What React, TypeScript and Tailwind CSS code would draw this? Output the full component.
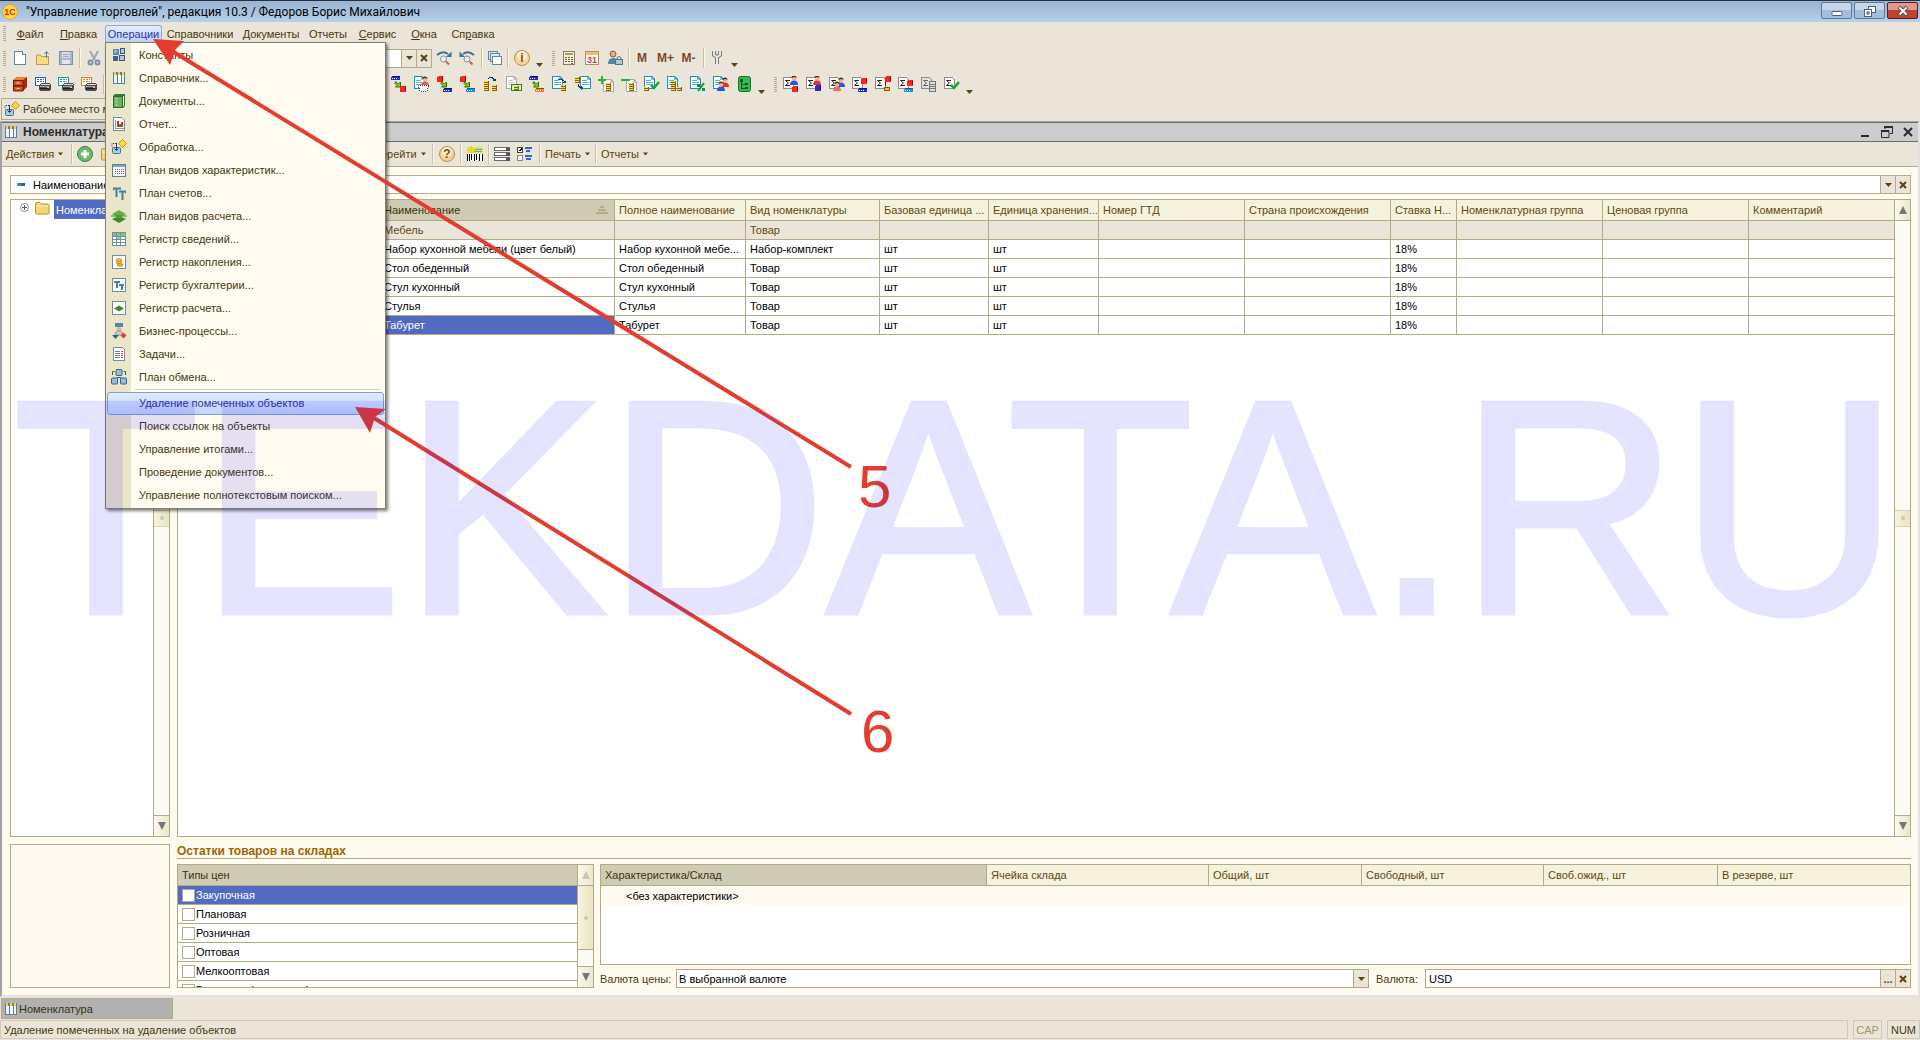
import React from "react";
import type { ReactNode } from "react";

/* ---------- icon parts ---------- */

function Ico({ children, crisp = true }: { children: ReactNode; crisp?: boolean }) {
  return (
    <svg
      viewBox="0 0 16 16"
      className="w-4 h-4 shrink-0 block"
      shapeRendering={crisp ? "crispEdges" : "auto"}
      aria-hidden="true"
    >
      {children}
    </svg>
  );
}

function Cube({ x, y, color, side }: { x: number; y: number; color: string; side: string }) {
  return (
    <g shapeRendering="auto">
      <path d={`M${x} ${y + 1}l2-1h4v5l-1 1h-5z`} fill={color} />
      <path d={`M${x + 5} ${y + 1}l1-1v5l-1 1z`} fill={side} />
    </g>
  );
}

function Bar({ x, y, color, dot }: { x: number; y: number; color: string; dot: string }) {
  return (
    <g>
      <rect x={x + 1} y={y} width="8" height="1" fill={dot} />
      <rect x={x} y={y + 1} width="9" height="3" fill={color} />
      <rect x={x + 1} y={y + 2} width="1" height="1" fill="#fff" />
      <rect x={x + 3} y={y + 2} width="1" height="1" fill="#fff" />
      <rect x={x + 5} y={y + 2} width="1" height="1" fill="#fff" />
    </g>
  );
}

function GreenArrow() {
  return (
    <path d="M4.500 5.500l3 2.500 2-2v5h-5l1.500-1.500-2-2z" fill="#8fd400" stroke="#3a6b00" shapeRendering="auto" />
  );
}

function Coins({ x, y, n }: { x: number; y: number; n: number }) {
  return (
    <g>
      {Array.from({ length: n }, (_, i) => (
        <g key={i}>
          <rect x={x} y={y - i * 2} width="5" height="2" fill="#8a6400" />
          <rect x={x} y={y - i * 2} width="4" height="1" fill="#ffd84a" />
        </g>
      ))}
    </g>
  );
}

function Page({ x = 0, y = 0, color = "#1c8fc4", lines = "#53b3dc" }) {
  return (
    <g>
      <path d={`M${x + 0.5} ${y + 0.5}h7l3 3v9h-10z`} fill="#fff" stroke={color} />
      <path d={`M${x + 7} ${y}h1l3 3v1h-4z`} fill={color} opacity="0.6" />
      <path d={`M${x + 2} ${y + 4.5}h5M${x + 2} ${y + 6.5}h7M${x + 2} ${y + 8.5}h7`} stroke={lines} />
    </g>
  );
}

function Person({ x, y, color }: { x: number; y: number; color: string }) {
  return (
    <g shapeRendering="auto">
      <path d={`M${x} ${y + 9}q0-4 3-4.500h2q3 .5 3 4.500z`} fill={color} />
      <circle cx={x + 4} cy={y + 2.5} r="2.300" fill="#f6b48c" />
      <path d={`M${x + 1.5} ${y + 2}q0-2.500 2.500-2.500t2.500 2.500l-2-1z`} fill="#5a2c10" />
    </g>
  );
}

function SigmaPage({ gray = false }: { gray?: boolean }) {
  return (
    <g>
      <path d="M.5 1.500h8l2 2v9H.5z" fill={gray ? "#e2e2e2" : "#fff"} stroke="#8d8d8d" />
      <path d="M7 4.500H2.500l3 2.500-3 2.500H7" fill="none" stroke={gray ? "#666" : "#222"} shapeRendering="auto" />
    </g>
  );
}

function Check() {
  return <path d="M7 9l3 3 5-6" fill="none" stroke="#0caa3c" strokeWidth="2.500" shapeRendering="auto" />;
}

function GridIcon() {
  return (
    <Ico>
      <rect x="2" y="2" width="12" height="12" fill="#5d8096" />
      <rect x="3" y="2" width="2" height="3" fill="#ffd23c" />
      <rect x="7" y="2" width="2" height="3" fill="#ffd23c" />
      <rect x="11" y="2" width="2" height="3" fill="#ffd23c" />
      <rect x="3" y="5" width="3" height="8" fill="#e9f4fa" />
      <rect x="7" y="5" width="3" height="8" fill="#fff" />
      <rect x="11" y="5" width="2" height="8" fill="#e9f4fa" />
    </Ico>
  );
}

function ProcessIcon() {
  return (
    <Ico crisp={false}>
      <rect x="1.500" y="8.500" width="8" height="6" rx="1" fill="#a9cbe4" stroke="#41749c" />
      <path d="M5.500 4v7M3.500 9.500l2 2 2-2" fill="none" stroke="#1d3c58" strokeWidth="1" />
      <path d="M1 7.500v-3h4" fill="none" stroke="#1d3c58" strokeDasharray="1 1" />
      <path d="M11.500 .5l4 4-4 4-4-4z" fill="#ffd63c" stroke="#c79310" />
    </Ico>
  );
}

function FolderIcon() {
  return (
    <Ico crisp={false}>
      <path d="M1.500 4q0-1.500 1.500-1.500h3l1.500 1.500h6.500q1 0 1 1v8q0 1-1 1H2.500q-1 0-1-1z" fill="#f4d877" stroke="#b8942c" />
      <path d="M2 6h12.500" stroke="#fdf0b8" />
    </Ico>
  );
}

function TTIcon() {
  return (
    <Ico crisp={false}>
      <path d="M2 3.500h8M5.500 3v9M8 6.500h7M11.500 6v9" stroke="#47809f" strokeWidth="2" fill="none" />
      <path d="M2.500 3v2.500M14.500 6v2.500" stroke="#47809f" />
    </Ico>
  );
}

function Frame({ children }: { children: ReactNode }) {
  return (
    <Ico>
      <rect x="1.500" y="1.500" width="13" height="13" fill="#fff" stroke="#6f8ea4" />
      {children}
    </Ico>
  );
}

function CabinetIcon() {
  return (
    <Ico crisp={false}>
      <path d="M1 4l4-3h10v10l-4 4H1z" fill="#9c2b10" />
      <path d="M1 4l4-3h10l-4 3z" fill="#f0803c" />
      <path d="M1.500 4.500h9.500v5H1.500zM1.500 10h9.500v5H1.500z" fill="#e2501e" stroke="#6a1a08" />
      <path d="M4.500 7h3M4.500 12.500h3" stroke="#ffe08a" />
    </Ico>
  );
}

function PrinterIcon({ color }: { color: string }) {
  return (
    <Ico>
      <path d="M.5 1.500h10v8H.5z" fill="#fff" stroke={color} />
      <path d="M2 3.500h7M2 5.500h7" stroke={color} strokeDasharray="2 1" />
      <path d="M4 9l2-2h8l2 2v4l-2 2H5l-1-1z" fill="#4c4c4c" />
      <path d="M6 8h8l1 1H5z" fill="#dcdcdc" />
      <path d="M5 10h9v1H5z" fill="#a8a8a8" />
      <path d="M5 12h9v1H5z" fill="#1b1b1b" />
      <rect x="12" y="11" width="2" height="1" fill="#ffd23c" />
    </Ico>
  );
}

function RoundIcon({ sign }: { sign: string }) {
  return (
    <svg viewBox="0 0 18 18" className="w-[18px] h-[18px] shrink-0 block" aria-hidden="true">
      <circle cx="9" cy="9" r="7.500" fill="#f9d39a" stroke="#c08a48" />
      <circle cx="9" cy="7" r="5" fill="#fdeacb" />
      <text x="9" y="13" textAnchor="middle" className="text-[12px] font-bold" fill="#6f5410" fontFamily="Liberation Sans, sans-serif">
        {sign}
      </text>
    </svg>
  );
}

/* ---------- data ---------- */

const menus = [
  { before: "", key: "Ф", after: "айл", w: "w-[44px]" },
  { before: "", key: "П", after: "равка", w: "w-[53px]" },
  { before: "Операции", key: "", after: "", w: "w-[57px]" },
  { before: "Справочники", key: "", after: "", w: "w-[76px]" },
  { before: "Документы", key: "", after: "", w: "w-[66px]" },
  { before: "Отчеты", key: "", after: "", w: "w-[48px]" },
  { before: "", key: "С", after: "ервис", w: "w-[51px]" },
  { before: "", key: "О", after: "кна", w: "w-[42px]" },
  { before: "Сп", key: "р", after: "авка", w: "w-[56px]" },
];

const operations: { label: string; icon: ReactNode }[] = [
  {
    label: "Константы",
    icon: (
      <Ico>
        <rect x="2" y="2" width="6" height="6" fill="#5c88ad" />
        <rect x="3" y="3" width="3" height="3" fill="#8fb4d2" />
        <rect x="9.500" y="1.500" width="4" height="5" fill="#a9cbe4" stroke="#33597a" />
        <rect x="2" y="9" width="5" height="5" fill="#36648c" />
        <rect x="8.500" y="8.500" width="5" height="5" fill="#a9cbe4" stroke="#33597a" />
      </Ico>
    ),
  },
  { label: "Справочник...", icon: <GridIcon /> },
  {
    label: "Документы...",
    icon: (
      <Ico crisp={false}>
        <path d="M2 3l2-2h10v12l-2 2H2z" fill="#2f7d3a" />
        <rect x="2.500" y="3.500" width="9" height="11" fill="#6db060" stroke="#2c6b35" />
        <path d="M4.500 6h2M4.500 9h2M4.500 12h2" stroke="#d8f0cc" />
        <path d="M12.500 3v10" stroke="#e8f4e0" />
      </Ico>
    ),
  },
  {
    label: "Отчет...",
    icon: (
      <Ico>
        <path d="M2.500 1.500h8l3 3v10h-11z" fill="#fff" stroke="#6f8ea4" />
        <path d="M4.500 4v8h8" fill="none" stroke="#8c9aa6" />
        <rect x="6" y="5" width="2" height="6" fill="#c8323c" />
        <rect x="8" y="8" width="2" height="3" fill="#2c8f4a" />
        <rect x="10" y="6" width="2" height="5" fill="#c8323c" />
      </Ico>
    ),
  },
  { label: "Обработка...", icon: <ProcessIcon /> },
  {
    label: "План видов характеристик...",
    icon: (
      <Ico>
        <rect x="1.500" y="2.500" width="13" height="12" fill="#f2f6fa" stroke="#5f7f99" />
        <rect x="2" y="3" width="12" height="2" fill="#7ea6c8" />
        <path d="M4 7.500h9M4 9.500h9M4 11.500h9" stroke="#6c6c6c" strokeDasharray="1 1" />
      </Ico>
    ),
  },
  { label: "План счетов...", icon: <TTIcon /> },
  {
    label: "План видов расчета...",
    icon: (
      <Ico crisp={false}>
        <path d="M1 11l7-3 7 3-7 4z" fill="#3b8a30" />
        <path d="M1 6l7-4 7 4-7 4z" fill="#63b048" />
        <path d="M0 8h16" stroke="#3b8a30" />
      </Ico>
    ),
  },
  {
    label: "Регистр сведений...",
    icon: (
      <Frame>
        <rect x="2" y="2" width="12" height="3" fill="#8cc07c" />
        <path d="M2 5.500h12M2 8.500h12M2 11.500h12M5.500 2v12M9.500 2v12" stroke="#6f8ea4" />
        <rect x="6" y="6" width="3" height="2" fill="#a8d49a" />
      </Frame>
    ),
  },
  {
    label: "Регистр накопления...",
    icon: (
      <Frame>
        <g shapeRendering="auto">
          <ellipse cx="9" cy="11" rx="3" ry="1.200" fill="#f6c840" stroke="#c98a10" />
          <ellipse cx="8" cy="8.500" rx="3" ry="1.200" fill="#f6c840" stroke="#c98a10" />
          <ellipse cx="8" cy="6" rx="3" ry="1.200" fill="#ffe27a" stroke="#c98a10" />
        </g>
      </Frame>
    ),
  },
  {
    label: "Регистр бухгалтерии...",
    icon: (
      <Frame>
        <path d="M3 5h6M6 5v6M8 8h5M10.500 8v5" stroke="#47809f" strokeWidth="2" />
      </Frame>
    ),
  },
  {
    label: "Регистр расчета...",
    icon: (
      <Frame>
        <path d="M3 8.500l5-3 5 3-5 3z" fill="#3b8a30" shapeRendering="auto" />
      </Frame>
    ),
  },
  {
    label: "Бизнес-процессы...",
    icon: (
      <Ico crisp={false}>
        <rect x="4" y="0" width="8" height="4" fill="#4d86b8" />
        <circle cx="8" cy="6.500" r="2.500" fill="#e8b478" />
        <path d="M4 12q0-4 4-4t4 4z" fill="#c9d4dc" stroke="#8a98a4" />
        <path d="M1 12h7l-3.500 4z" fill="#3c607f" />
        <path d="M12.500 9.500l3 3-3 3-3-3z" fill="#e0402c" />
      </Ico>
    ),
  },
  {
    label: "Задачи...",
    icon: (
      <Ico>
        <path d="M2.500 1.500h9l2 2v11h-11z" fill="#fff" stroke="#7d8fa0" />
        <path d="M4 5.500h5M4 7.500h5M4 9.500h5M4 11.500h5" stroke="#6b7f92" />
        <path d="M10 5.500h2M10 7.500h2M10 9.500h2M10 11.500h2" stroke="#d83a2c" />
      </Ico>
    ),
  },
  {
    label: "План обмена...",
    icon: (
      <Ico crisp={false}>
        <rect x="5" y="0.500" width="6" height="6" rx="1" fill="#8fc0e0" stroke="#32648c" />
        <rect x="0.500" y="9" width="6" height="6" rx="1" fill="#8fc0e0" stroke="#32648c" />
        <rect x="9.500" y="9" width="6" height="6" rx="1" fill="#8fc0e0" stroke="#32648c" />
        <path d="M1.500 6V2.500h2M14.500 6V2.500h-2M6 8.500h4" stroke="#2c6b35" fill="none" />
      </Ico>
    ),
  },
];

const serviceItems = [
  "Удаление помеченных объектов",
  "Поиск ссылок на объекты",
  "Управление итогами...",
  "Проведение документов...",
  "Управление полнотекстовым поиском...",
];

const blue = "#2a2ad0";

const docIcons: ReactNode[] = [
  <><Bar x={0} y={0} color={blue} dot="#111170" /><GreenArrow /><Cube x={9} y={10} color="#ff2020" side="#a00000" /></>,
  <><Page /><Person x={7} y={1} color="#f05a50" /><path d="M4 9h11l-2 6H6z" fill="#fff" stroke="#444" strokeDasharray="1 1" /></>,
  <><Cube x={0} y={0} color="#ff2020" side="#a00000" /><GreenArrow /><Bar x={6} y={12} color={blue} dot="#111170" /></>,
  <><Cube x={0} y={0} color="#ff2020" side="#a00000" /><GreenArrow /><Bar x={6} y={12} color="#1c8fe0" dot="#0d5fa8" /></>,
  <><Coins x={1} y={13} n={5} /><Coins x={9} y={13} n={3} /><path d="M5 3q4-4 7 2M10 4l2 1 1-2" fill="none" stroke="#123c78" /></>,
  <><Page color="#a8a8a8" lines="#c8c8c8" /><rect x="5.500" y="8.500" width="10" height="6" fill="#d8f0d0" stroke="#1c8a2c" /><Coins x={8} y={12} n={2} /></>,
  <><Bar x={0} y={0} color={blue} dot="#111170" /><GreenArrow /><Bar x={6} y={12} color="#f08030" dot="#a04a10" /></>,
  <><Page /><Coins x={9} y={13} n={3} /><path d="M6 4q5-2 7 3M11 6l2 1 1-2" fill="none" stroke="#123c78" /></>,
  <><Page x={5} /><Coins x={0} y={5} n={3} /><path d="M3 8q0 4 5 4M6 10l2 2-2 2" fill="none" stroke="#123c78" /></>,
  <><Page x={5} y={3} color="#a8a8a8" lines="#d0d0d0" /><path d="M0 4h8M4 0v8" stroke="#22b43c" strokeWidth="2" /><Coins x={8} y={13} n={4} /></>,
  <><Page x={5} y={3} color="#a8a8a8" lines="#d0d0d0" /><path d="M0 4h9" stroke="#22b43c" strokeWidth="2" /><Coins x={8} y={13} n={4} /></>,
  <><Page /><Check /><Coins x={0} y={13} n={2} /></>,
  <><Page /><Coins x={4} y={13} n={5} /><Coins x={10} y={13} n={2} /></>,
  <><Page /><path d="M14 7l-6 8" stroke="#0a9a3c" strokeWidth="2" shapeRendering="auto" /><rect x="7" y="8" width="3" height="3" fill="#0a9a3c" /><rect x="12" y="12" width="3" height="3" fill="#0a9a3c" /></>,
  <><Page /><Person x={8} y={2} color="#e83030" /><Person x={4} y={6} color="#2458d8" /></>,
  <><rect x="2.500" y="0.500" width="12" height="15" rx="2" fill="#38b84c" stroke="#0a7a2c" shapeRendering="auto" /><rect x="4" y="3" width="3" height="3" fill="#105a24" /><path d="M5.500 6v6H9M5.500 8.500H9" stroke="#105a24" fill="none" /><rect x="9.500" y="7.500" width="2" height="1" fill="none" stroke="#105a24" /><rect x="9.500" y="11.500" width="2" height="1" fill="none" stroke="#105a24" /></>,
];

const reportIcons: ReactNode[] = [
  <><SigmaPage /><Person x={7} y={0} color="#2458d8" /><Cube x={9} y={10} color="#ff2020" side="#a00000" /></>,
  <><SigmaPage /><Person x={7} y={0} color="#e83030" /><Cube x={9} y={9} color="#2a2ae0" side="#10107a" /></>,
  <><SigmaPage /><Person x={8} y={2} color="#2458d8" /><Person x={4} y={6} color="#f06a6a" /></>,
  <><SigmaPage /><Cube x={9} y={2} color="#ff2020" side="#a00000" /><Bar x={6} y={12} color={blue} dot="#111170" /></>,
  <><SigmaPage /><Cube x={10} y={0} color="#ff2020" side="#a00000" /><path d="M10.500 6v4" stroke="#a00000" /><rect x="9.500" y="11.500" width="5" height="3" fill="#ffc040" stroke="#8a5400" /></>,
  <><SigmaPage /><Cube x={9} y={4} color="#ff2020" side="#a00000" /><Bar x={6} y={12} color="#1c8fe0" dot="#0d5fa8" /></>,
  <><SigmaPage gray /><rect x="8.500" y="5.500" width="6" height="10" fill="#ddd" stroke="#777" /><path d="M9 8.500h5M9 10.500h5M9 12.500h5" stroke="#777" /></>,
  <><SigmaPage /><Check /></>,
];

const columns = [
  { title: "Наименование", w: "w-[235px]" },
  { title: "Полное наименование", w: "w-[131px]" },
  { title: "Вид номенклатуры", w: "w-[134px]" },
  { title: "Базовая единица ...", w: "w-[109px]" },
  { title: "Единица хранения...", w: "w-[110px]" },
  { title: "Номер ГТД", w: "w-[146px]" },
  { title: "Страна происхождения", w: "w-[146px]" },
  { title: "Ставка Н...", w: "w-[66px]" },
  { title: "Номенклатурная группа", w: "w-[146px]" },
  { title: "Ценовая группа", w: "w-[146px]" },
  { title: "Комментарий", w: "w-[146px]" },
];

const goods = [
  ["Набор кухонной мебели (цвет белый)", "Набор кухонной мебе...", "Набор-комплект"],
  ["Стол обеденный", "Стол обеденный", "Товар"],
  ["Стул кухонный", "Стул кухонный", "Товар"],
  ["Стулья", "Стулья", "Товар"],
  ["Табурет", "Табурет", "Товар"],
];

const priceTypes = ["Закупочная", "Плановая", "Розничная", "Оптовая", "Мелкооптовая", "Валютная (расчетная) цена"];

const stockColumns = [
  { title: "Характеристика/Склад", w: "w-[386px]" },
  { title: "Ячейка склада", w: "w-[222px]" },
  { title: "Общий, шт", w: "w-[153px]" },
  { title: "Свободный, шт", w: "w-[182px]" },
  { title: "Своб.ожид., шт", w: "w-[174px]" },
  { title: "В резерве, шт", w: "" },
];

/* ---------- small controls ---------- */

function Caret({ className = "" }: { className?: string }) {
  return (
    <svg viewBox="0 0 7 4" className={`h-1 shrink-0 ${className || "w-[7px]"}`} aria-hidden="true">
      <path d="M0 0h7L3.500 4z" fill="#5a4408" />
    </svg>
  );
}

function Cross() {
  return (
    <svg viewBox="0 0 8 8" className="w-2 h-2" aria-hidden="true">
      <path d="M1 1l6 6M7 1L1 7" stroke="#5a4408" strokeWidth="2" />
    </svg>
  );
}

function Sep() {
  return <span className="w-[2px] h-5 shrink-0 border-l border-[#c9c19c] bg-[#faf7ec]" />;
}

function Grip() {
  return (
    <span className="w-[3px] h-[15px] shrink-0 bg-[repeating-linear-gradient(180deg,#b3ab8c_0px,#b3ab8c_1px,transparent_1px,transparent_2px)]" />
  );
}

function ToolButton({ label, children, className = "" }: { label: string; children: ReactNode; className?: string }) {
  return (
    <button type="button" aria-label={label} className={`shrink-0 flex items-center justify-center ${className}`}>
      {children}
    </button>
  );
}

function EditButton({ label, children }: { label: string; children: ReactNode }) {
  return (
    <button
      type="button"
      aria-label={label}
      className="w-[15px] h-full shrink-0 flex items-center justify-center border-l border-[#b3ab84] bg-[#ebe4d8] text-[#5a4408] font-bold"
    >
      {children}
    </button>
  );
}

function ScrollArrow({ up = false, dim = false }: { up?: boolean; dim?: boolean }) {
  return (
    <button
      type="button"
      aria-label={up ? "Вверх" : "Вниз"}
      className={`h-[21px] w-full shrink-0 flex items-center justify-center bg-linear-to-r from-[#fbf9ee] to-[#ece7cb] border-[#b3ab84] ${up ? "border-b" : "border-t"}`}
    >
      <svg viewBox="0 0 8 8" className="w-2 h-2" aria-hidden="true">
        <path d={up ? "M0 8h8L4 0z" : "M0 0h8L4 8z"} fill={dim ? "#c9c5b0" : "#77757a"} />
      </svg>
    </button>
  );
}

function Scrollbar({ thumb, start, end, dim = false }: { thumb: string; start: string; end: string; dim?: boolean }) {
  return (
    <div className="w-4 shrink-0 flex flex-col border-l border-[#b3ab84] bg-[#fbfaf4]">
      <ScrollArrow up dim={dim} />
      <div className={start} />
      <div className={`${thumb} flex items-center justify-center bg-linear-to-r from-[#f7f4df] to-[#e9e3c2]`}>
        <span className="w-1 h-1 rounded-full bg-[#cdc8a8]" />
      </div>
      <div className={end} />
      <ScrollArrow />
    </div>
  );
}

/* ---------- page parts ---------- */

function TitleBar() {
  return (
    <header className="h-[22px] shrink-0 flex items-center border-t border-[#2b3038] bg-linear-to-b from-[#98b4d2] to-[#b7d0ea] pl-[2px] pr-[2px]">
      <svg viewBox="0 0 16 16" className="w-4 h-4 mr-2" aria-hidden="true">
        <circle cx="8" cy="8" r="7.500" fill="#ffd84a" stroke="#e8a820" />
        <text x="8" y="11" textAnchor="middle" className="text-[9px] font-bold" fill="#d8281c" fontFamily="Liberation Sans, sans-serif">
          1С
        </text>
      </svg>
      <h1 className="flex-1 text-[12px] text-black font-[Roboto,'Noto_Sans',sans-serif]">
        "Управление торговлей", редакция 10.3 / Федоров Борис Михайлович
      </h1>
      <div className="flex gap-[2px] self-start pt-px">
        <button type="button" aria-label="Свернуть" className="w-[31px] h-[17px] flex items-center justify-center rounded-[2px] border border-[#5f7896] bg-linear-to-b from-[#c3d6ea] from-50% to-[#a3bddb] to-50%">
          <svg viewBox="0 0 12 12" className="w-3 h-3" aria-hidden="true">
            <rect x="1" y="6.500" width="10" height="4" rx="1" fill="#fff" stroke="#55606e" />
          </svg>
        </button>
        <button type="button" aria-label="Восстановить" className="w-[31px] h-[17px] flex items-center justify-center rounded-[2px] border border-[#5f7896] bg-linear-to-b from-[#c3d6ea] from-50% to-[#a3bddb] to-50%">
          <svg viewBox="0 0 12 12" className="w-3 h-3" aria-hidden="true">
            <rect x="4.500" y="1.500" width="7" height="6" fill="#fff" stroke="#55606e" />
            <rect x="0.500" y="4.500" width="7" height="7" fill="#fff" stroke="#55606e" />
            <rect x="3" y="7" width="2" height="2" fill="#8fb0d0" stroke="#55606e" />
          </svg>
        </button>
        <button type="button" aria-label="Закрыть" className="w-[31px] h-[17px] flex items-center justify-center rounded-[2px] border border-[#5a1a24] bg-linear-to-b from-[#e0988c] from-50% to-[#bd4530] to-50%">
          <svg viewBox="0 0 12 12" className="w-3 h-3" aria-hidden="true">
            <path d="M2 2l8 8M10 2l-8 8" stroke="#5d4a54" strokeWidth="4" />
            <path d="M2.500 2.500l7 7M9.500 2.500l-7 7" stroke="#fff" strokeWidth="2" />
          </svg>
        </button>
      </div>
    </header>
  );
}

function OperationsMenu() {
  return (
    <div
      role="menu"
      className="absolute left-0 top-[17px] z-20 w-[281px] border border-[#84826f] p-px bg-[linear-gradient(90deg,#ebe5c9_25px,#fffbf0_25px)] shadow-[2px_2px_3px_rgba(0,0,0,0.5)]"
    >
      {operations.map((item) => (
        <button key={item.label} type="button" role="menuitem" className="flex w-full h-[23px] items-center pl-1 gap-3 text-left whitespace-nowrap">
          {item.icon}
          <span>{item.label}</span>
        </button>
      ))}
      <div className="ml-7 mr-1 h-[3px] border-t border-[#d6d0b8]" />
      {serviceItems.map((label, i) => (
        <button
          key={label}
          type="button"
          role="menuitem"
          className={`flex w-full h-[23px] items-center pl-[31px] text-left whitespace-nowrap border rounded-[3px] ${
            i === 0 ? "border-[#7f9fe0] bg-linear-to-b from-[#e2ecff] to-[#bfd4ff] text-[#2b3aa0]" : "border-transparent"
          }`}
        >
          {label}
        </button>
      ))}
    </div>
  );
}

function MenuBar() {
  return (
    <nav className="h-[23px] shrink-0 flex items-center pl-[3px]">
      <Grip />
      <div className="w-[2px]" />
      {menus.map((m) =>
        m.before === "Операции" ? (
          <div key={m.before} className="relative h-[18px] w-[57px] shrink-0">
            <button type="button" aria-expanded="true" className="w-full h-full flex items-center justify-center border border-[#8fa8e0] border-b-0 rounded-t-[3px] bg-linear-to-b from-[#e4edff] to-[#bcd0fa] text-[#2b3aa0]">
              {m.before}
            </button>
            <OperationsMenu />
          </div>
        ) : (
          <button key={m.before + m.key} type="button" className={`${m.w} h-[18px] text-center whitespace-nowrap`}>
            {m.before}
            <u>{m.key}</u>
            {m.after}
          </button>
        )
      )}
    </nav>
  );
}

function MainToolbar() {
  return (
    <div className="h-[26px] shrink-0 flex items-center pl-[3px] text-[#7a4a2a]">
      <Grip />
      <div className="flex items-center gap-[7px] pl-[6px]">
        <ToolButton label="Новый">
          <Ico>
            <path d="M2.500 1.500h8l3 3v10h-11z" fill="#fff" stroke="#6486a4" />
            <path d="M10.500 1.500v3h3" fill="#cfe0ee" stroke="#6486a4" />
          </Ico>
        </ToolButton>
        <ToolButton label="Открыть">
          <Ico crisp={false}>
            <path d="M1.500 5h4l1 1.500h7v8h-12z" fill="#f7dc80" stroke="#c09a34" />
            <path d="M11.500 8V2M9.500 4l2-2.500 2 2.500" fill="none" stroke="#4a7ca4" />
          </Ico>
        </ToolButton>
        <ToolButton label="Сохранить">
          <Ico>
            <rect x="1.500" y="1.500" width="13" height="13" fill="#a9b7c6" stroke="#7f92a6" />
            <rect x="4" y="2" width="8" height="6" fill="#d6dfe8" />
            <rect x="4" y="10" width="8" height="4" fill="#dfe6ee" />
            <path d="M5 4.500h6M5 6.500h6" stroke="#9aacbe" />
          </Ico>
        </ToolButton>
      </div>
      <div className="w-[5px]" />
      <Sep />
      <div className="w-[5px]" />
      <ToolButton label="Вырезать">
        <Ico crisp={false}>
          <path d="M4 1l5 9M12 1L7 10" stroke="#98a8b6" strokeWidth="2" />
          <circle cx="4.500" cy="12.500" r="2" fill="none" stroke="#7f92a6" strokeWidth="2" />
          <circle cx="11.500" cy="12.500" r="2" fill="none" stroke="#7f92a6" strokeWidth="2" />
        </Ico>
      </ToolButton>
      <div className="flex h-[19px] ml-[90px] w-[240px] bg-white border border-[#b3ab84]">
        <input aria-label="Поиск" className="flex-1 min-w-0 px-1 outline-none" />
        <EditButton label="Список"><Caret /></EditButton>
        <EditButton label="Очистить"><Cross /></EditButton>
      </div>
      <div className="flex items-center gap-[7px] pl-1">
        <ToolButton label="Найти следующий">
          <Ico crisp={false}>
            <path d="M1 5q6-5 11-1" fill="none" stroke="#3f7396" strokeWidth="2" />
            <path d="M15.500 1.500v5.500H10z" fill="#3f7396" />
            <circle cx="7.500" cy="9" r="3" fill="#eef4f8" stroke="#8c8f94" />
            <path d="M10 11.500l3 3" stroke="#b0705c" strokeWidth="2" />
          </Ico>
        </ToolButton>
        <ToolButton label="Найти предыдущий">
          <Ico crisp={false}>
            <path d="M15 5q-6-5-11-1" fill="none" stroke="#3f7396" strokeWidth="2" />
            <path d="M.5 1.500v5.500H6z" fill="#3f7396" />
            <circle cx="8" cy="9" r="3" fill="#eef4f8" stroke="#8c8f94" />
            <path d="M10.500 11.500l3 3" stroke="#b0705c" strokeWidth="2" />
          </Ico>
        </ToolButton>
      </div>
      <div className="w-[6px]" />
      <Sep />
      <div className="w-1" />
      <ToolButton label="Окна">
        <Ico>
          <rect x="1.500" y="1.500" width="9" height="8" fill="#dbe8f2" stroke="#5f86a6" />
          <rect x="3.500" y="3.500" width="9" height="8" fill="#dbe8f2" stroke="#5f86a6" />
          <rect x="5.500" y="6.500" width="9" height="8" fill="#fff" stroke="#5f86a6" />
        </Ico>
      </ToolButton>
      <div className="w-1" />
      <Sep />
      <div className="w-1" />
      <ToolButton label="Справка"><RoundIcon sign="i" /></ToolButton>
      <Caret className="w-[7px] ml-[5px] self-end mb-1" />
      <div className="w-[9px]" />
      <Grip />
      <div className="flex items-center gap-[7px] pl-[6px]">
        <ToolButton label="Калькулятор">
          <Ico>
            <rect x="2.500" y="1.500" width="11" height="13" fill="#f6efdc" stroke="#8c7a54" />
            <rect x="4" y="3" width="8" height="2" fill="#7fae6a" />
            <path d="M4 7.500h8M4 9.500h8M4 11.500h8" stroke="#6b5a34" strokeDasharray="2 1" />
            <path d="M10 13h2" stroke="#d84030" />
          </Ico>
        </ToolButton>
        <ToolButton label="Календарь">
          <Ico>
            <rect x="1.500" y="1.500" width="13" height="13" fill="#fff" stroke="#c08a60" />
            <rect x="2" y="2" width="12" height="3" fill="#f0bc78" />
            <text x="8" y="13" textAnchor="middle" className="text-[9px] font-bold" fill="#dc3c28" fontFamily="Liberation Sans, sans-serif">
              31
            </text>
          </Ico>
        </ToolButton>
        <ToolButton label="Пользователи">
          <Ico crisp={false}>
            <circle cx="6" cy="4" r="3" fill="#e2b070" stroke="#8a6430" />
            <path d="M1 14q0-6 5-6t5 5v1z" fill="#4d86b0" />
            <rect x="8.500" y="9.500" width="7" height="5" fill="#b9c4cd" stroke="#5d7080" />
            <path d="M10 9V7.500q2-2 4 0V9" fill="none" stroke="#5d7080" />
          </Ico>
        </ToolButton>
      </div>
      <div className="w-[5px]" />
      <Sep />
      <div className="w-[7px]" />
      <button type="button" className="w-[10px] text-[12px] font-bold">M</button>
      <button type="button" className="w-[17px] ml-[10px] text-[12px] font-bold">M+</button>
      <button type="button" className="w-[17px] ml-[6px] text-[12px] font-bold">M-</button>
      <div className="w-[6px]" />
      <Sep />
      <div className="w-1" />
      <ToolButton label="Настройка">
        <Ico crisp={false}>
          <path d="M5 1v4l3 2 3-2V1M8 7v7" fill="none" stroke="#7c7c7c" strokeWidth="4" />
          <path d="M5 1v4l3 2 3-2V1M8 7v7" fill="none" stroke="#e6e6e6" strokeWidth="2" />
        </Ico>
      </ToolButton>
      <Caret className="w-[7px] ml-[6px] self-end mb-1" />
    </div>
  );
}

function DocToolbar() {
  return (
    <div className="h-[26px] shrink-0 flex items-center pl-[3px]">
      <Grip />
      <div className="flex gap-[7px] pl-[6px]">
        <ToolButton label="Картотека"><CabinetIcon /></ToolButton>
        <ToolButton label="Печать списка"><PrinterIcon color="#2a5ad8" /></ToolButton>
        <ToolButton label="Печать документа"><PrinterIcon color="#1c9aa4" /></ToolButton>
        <ToolButton label="Печать ценников"><PrinterIcon color="#f07a2c" /></ToolButton>
      </div>
      <div className="w-[6px]" />
      <Sep />
      <div className="flex gap-[7px] pl-[286px]">
        {docIcons.map((icon, i) => (
          <ToolButton key={i} label={`Документ ${i + 1}`}><Ico>{icon}</Ico></ToolButton>
        ))}
      </div>
      <Caret className="w-[7px] ml-[6px] self-end mb-[3px]" />
      <div className="w-[9px]" />
      <Grip />
      <div className="flex gap-[7px] pl-[6px]">
        {reportIcons.map((icon, i) => (
          <ToolButton key={i} label={`Отчет ${i + 1}`}><Ico>{icon}</Ico></ToolButton>
        ))}
      </div>
      <Caret className="w-[7px] ml-[6px] self-end mb-[3px]" />
    </div>
  );
}

function ListToolbar() {
  return (
    <div className="h-[25px] shrink-0 flex items-center pl-1 border-b border-[#b3ab84] bg-[#ebe4d8] text-[#5a4408]">
      <button type="button" className="flex items-center gap-1 w-[65px]">Действия <Caret className="w-[5px]" /></button>
      <Sep />
      <ToolButton label="Добавить" className="ml-[3px]">
        <svg viewBox="0 0 18 18" className="w-[18px] h-[18px]" aria-hidden="true">
          <circle cx="9" cy="9" r="7.500" fill="#6fb868" stroke="#3f7f44" />
          <path d="M9 5v8M5 9h8" stroke="#fff" strokeWidth="3" />
        </svg>
      </ToolButton>
      <ToolButton label="Новая группа" className="ml-[6px]"><FolderIcon /></ToolButton>
      <button type="button" className="flex items-center gap-1 ml-[257px] w-[59px]">Перейти <Caret className="w-[5px]" /></button>
      <Sep />
      <ToolButton label="Справка" className="mx-1"><RoundIcon sign="?" /></ToolButton>
      <Sep />
      <ToolButton label="Штрихкод" className="mx-1 w-[18px]">
        <Ico>
          <rect x="0" y="1" width="16" height="6" fill="#c8f050" />
          <path d="M7 3.500h8M7 5.500h8" stroke="#8a96a8" />
          <path d="M4 0v7M0 3.500h8" stroke="#ffc820" strokeWidth="2" />
          <rect x="0" y="8" width="16" height="7" fill="#fff" />
          <path d="M.5 8v7M2.500 8v7M4.500 8v6M7.500 8v7M9.500 8v6M12.500 8v7M15.500 8v7" stroke="#000" />
        </Ico>
      </ToolButton>
      <Sep />
      <div className="flex gap-[7px] px-1">
        <ToolButton label="Список">
          <Ico>
            <path d="M.5 1.500h15v3H.5zM.5 6.500h15v3H.5zM.5 11.500h15v3H.5z" fill="#fff" stroke="#6b6b6b" />
            <path d="M12 2h4v3h-4zM12 7h4v3h-4zM12 12h4v3h-4z" fill="#555" />
          </Ico>
        </ToolButton>
        <ToolButton label="Отбор">
          <Ico>
            <rect x="0.500" y="1.500" width="5" height="5" fill="#fff" stroke="#444" />
            <path d="M2 4l1 1 2-3" stroke="#000" fill="none" />
            <rect x="0.500" y="9.500" width="5" height="5" fill="#fff" stroke="#888" />
            <path d="M8 2h7M9 5h4M8 10h7M9 13h5" stroke="#2c68d8" strokeWidth="2" />
          </Ico>
        </ToolButton>
      </div>
      <div className="w-[2px]" />
      <Sep />
      <button type="button" className="flex items-center gap-1 pl-1 w-[54px]">Печать <Caret className="w-[5px]" /></button>
      <Sep />
      <button type="button" className="flex items-center gap-1 pl-1">Отчеты <Caret className="w-[5px]" /></button>
    </div>
  );
}

const cell = "border-b border-r border-[#b3ab84] pl-1 whitespace-nowrap overflow-hidden font-normal text-left";

function GoodsTable() {
  return (
    <div className="flex min-h-0 border border-[#b3ab84] bg-white overflow-hidden">
      <div className="flex-1 min-w-0">
        <table className="w-full table-fixed border-separate border-spacing-0">
          <thead>
            <tr className="h-[21px] bg-[#f5f2dd] text-[#5f4a10]">
              <th className={`${cell} w-[202px]`} aria-label="Код" />
              {columns.map((c, i) => (
                <th key={c.title} className={`${cell} ${c.w} ${i === 0 ? "bg-[#cfccb6] text-[#3f3208]" : ""}`}>
                  {i === 0 ? (
                    <span className="flex items-center justify-between">
                      {c.title}
                      <svg viewBox="0 0 12 9" className="w-3 h-[9px] mr-[6px]" aria-hidden="true">
                        <path d="M4 1h4M2 4h8M0 7h12" stroke="#b5ad7c" strokeWidth="2" />
                      </svg>
                    </span>
                  ) : (
                    c.title
                  )}
                </th>
              ))}
            </tr>
          </thead>
          <tbody>
            <tr className="h-[19px] bg-[#ebe4d9] text-[#5f4a10]">
              <td className={cell} />
              <td className={cell}>Мебель</td>
              <td className={cell} />
              <td className={cell}>Товар</td>
              {columns.slice(3).map((c) => <td key={c.title} className={cell} />)}
            </tr>
            {goods.map(([name, full, kind]) => (
              <tr key={name} className="h-[19px] text-black">
                <td className={cell} />
                <td className={`${cell} ${name === "Табурет" ? "bg-[#536ac2] text-white" : ""}`}>{name}</td>
                <td className={cell}>{full}</td>
                <td className={cell}>{kind}</td>
                <td className={cell}>шт</td>
                <td className={cell}>шт</td>
                <td className={cell} />
                <td className={cell} />
                <td className={cell}>18%</td>
                <td className={cell} />
                <td className={cell} />
                <td className={cell} />
              </tr>
            ))}
          </tbody>
        </table>
      </div>
      <Scrollbar start="flex-1" thumb="h-[17px] border-y border-[#d8d2b4]" end="flex-1" />
    </div>
  );
}

function PriceTypes() {
  return (
    <div className="w-[417px] h-[124px] shrink-0 flex border border-[#b3ab84] bg-white overflow-hidden">
      <div className="flex-1 min-w-0">
        <div className="h-[21px] flex items-center px-1 border-b border-[#b3ab84] bg-[#cfccb6] text-[#3f3208]">Типы цен</div>
        {priceTypes.map((p, i) => (
          <label
            key={p}
            className={`h-[19px] flex items-center gap-px pl-1 border-b border-[#b3ab84] ${i === 0 ? "bg-[#536ac2] text-white" : "text-black"}`}
          >
            <input type="checkbox" className="appearance-none w-[13px] h-[13px] shrink-0 bg-white border border-[#b3ab84]" />
            {p}
          </label>
        ))}
      </div>
      <Scrollbar dim start="h-0" thumb="h-[64px] border-b border-[#b3ab84]" end="flex-1" />
    </div>
  );
}

function Stock() {
  return (
    <div className="flex-1 min-w-0 h-[124px] flex flex-col gap-1">
      <div className="h-[101px] border border-[#b3ab84] bg-white">
        <table className="w-full table-fixed border-separate border-spacing-0">
          <thead>
            <tr className="h-[21px] bg-[#f5f2dd] text-[#5f4a10]">
              {stockColumns.map((c, i) => (
                <th
                  key={c.title}
                  className={`${c.w} border-b border-[#b3ab84] px-1 font-normal text-left ${i === 0 ? "bg-[#cfccb6] text-[#3f3208]" : ""} ${
                    i < stockColumns.length - 1 ? "border-r" : ""
                  }`}
                >
                  {c.title}
                </th>
              ))}
            </tr>
          </thead>
          <tbody>
            <tr className="h-[19px] bg-[#fffaf0] text-black">
              <td colSpan={6} className="pl-[25px]">&lt;без характеристики&gt;</td>
            </tr>
          </tbody>
        </table>
      </div>
      <div className="flex items-center h-[19px] text-[#4a3a10]">
        <label htmlFor="price-currency" className="w-[76px] shrink-0">Валюта цены:</label>
        <div className="flex-1 h-full flex border border-[#b3ab84] bg-white text-black">
          <select id="price-currency" className="appearance-none flex-1 min-w-0 px-[2px] outline-none">
            <option>В выбранной валюте</option>
          </select>
          <EditButton label="Выбрать валюту цены"><Caret /></EditButton>
        </div>
        <label htmlFor="currency" className="w-[56px] pl-[7px] shrink-0">Валюта:</label>
        <div className="w-[486px] h-full flex border border-[#b3ab84] bg-white text-black">
          <input id="currency" defaultValue="USD" className="flex-1 min-w-0 px-[3px] outline-none" />
          <EditButton label="Выбрать">...</EditButton>
          <EditButton label="Очистить"><Cross /></EditButton>
        </div>
      </div>
    </div>
  );
}

function ListWindow() {
  return (
    <section className="flex-1 min-h-0 flex flex-col border-t border-t-[#a6a6a6] border-l-2 border-l-[#a3a1a8] border-r-2 border-r-[#e2e2e2] border-b-2 border-b-[#e2e2e2] bg-[#fffaf0]">
      <div className="h-[20px] shrink-0 flex items-center pl-px pr-[5px] border-y border-[#6b6b6b] bg-[#cccccc] text-[#2b2b2b]">
        <GridIcon />
        <h2 className="flex-1 ml-1 text-[12px] font-bold">Номенклатура</h2>
        <div className="flex items-center gap-[10px]">
          <ToolButton label="Свернуть окно">
            <svg viewBox="0 0 12 12" className="w-3 h-3" aria-hidden="true"><path d="M2 10h8" stroke="#2b2b2b" strokeWidth="2" /></svg>
          </ToolButton>
          <ToolButton label="Восстановить окно">
            <svg viewBox="0 0 12 12" className="w-3 h-3" aria-hidden="true">
              <path d="M4 3V1h7.500v6.500H9" fill="none" stroke="#2b2b2b" strokeWidth="1" />
              <path d="M.5 5h7.500v6.500H.5z" fill="none" stroke="#2b2b2b" />
              <path d="M3 1h9M0 5h8" stroke="#2b2b2b" strokeWidth="2" />
            </svg>
          </ToolButton>
          <ToolButton label="Закрыть окно">
            <svg viewBox="0 0 10 10" className="w-[10px] h-[10px]" aria-hidden="true"><path d="M1 1l8 8M9 1L1 9" stroke="#2b2b2b" strokeWidth="2" /></svg>
          </ToolButton>
        </div>
      </div>
      <ListToolbar />
      <div className="flex-1 min-h-0 flex flex-col gap-[5px] pt-2 pl-2 pr-[7px] pb-[7px]">
        <div className="h-[19px] shrink-0 flex items-center border border-[#b3ab84] bg-white text-black">
          <span className="w-2 h-[3px] mx-[6px] shrink-0 bg-linear-to-r from-[#4a9be0] to-[#1c4f9c]" />
          <input aria-label="Отбор" defaultValue="Наименование" className="flex-1 min-w-0 pl-[2px] outline-none" />
          <EditButton label="Список"><Caret /></EditButton>
          <EditButton label="Очистить"><Cross /></EditButton>
        </div>
        <div className="flex-1 min-h-0 grid grid-cols-[160px_minmax(0,1fr)] grid-rows-[minmax(0,1fr)_144px] gap-[7px]">
          <aside className="flex border border-[#b3ab84] bg-white">
            <div className="flex-1 min-w-0 flex h-[19px]">
              <svg viewBox="0 0 9 9" className="w-[9px] h-[9px] ml-[9px] mt-[3px]" aria-hidden="true">
                <circle cx="4.500" cy="4.500" r="4" fill="#fff" stroke="#8c8c8c" />
                <path d="M2 4.500h5M4.500 2v5" stroke="#555" />
              </svg>
              <div className="ml-[5px]"><FolderIcon /></div>
              <span className="flex-1 ml-[4px] pl-[2px] h-[19px] flex items-center bg-[#536ac2] text-white">Номенклатура</span>
            </div>
            <Scrollbar start="flex-1" thumb="h-[17px] border-y border-[#d8d2b4]" end="flex-1" />
          </aside>
          <GoodsTable />
          <div className="border border-[#b3ab84]" />
          <div className="flex flex-col justify-between min-w-0">
            <h3 className="h-[15px] flex items-center border-b border-[#b3ab84] text-[12px] font-bold text-[#a06400]">Остатки товаров на складах</h3>
            <div className="flex gap-[6px]">
              <PriceTypes />
              <Stock />
            </div>
          </div>
        </div>
      </div>
    </section>
  );
}

/* Red callouts and the site mark that lie over the window */
function Annotations() {
  return (
    <div className="absolute inset-0 z-30 pointer-events-none overflow-hidden">
      <svg viewBox="0 0 1920 1040" className="absolute left-0 top-0 w-[1920px] h-[1040px]" aria-hidden="true">
        <g stroke="#e43d30" strokeWidth="4" fill="#e43d30">
          <path d="M172 51L851 467" />
          <path d="M374 418L851 714" />
          <path d="M153 39l31 2-9 9-5 15z" stroke="none" />
          <path d="M355 407l31 2-11 8-5 16z" stroke="none" />
        </g>
        <g fill="#e43d30" className="text-[60px]" fontFamily="Liberation Sans, sans-serif">
          <text x="858" y="507">5</text>
          <text x="861" y="752">6</text>
        </g>
      </svg>
      <div className="absolute left-[13px] top-[355px] text-[305px] leading-none whitespace-nowrap text-[#0000ff] opacity-10 [-webkit-text-stroke:5px_#0000ff]">
        TEKDATA.RU
      </div>
    </div>
  );
}

function App() {
  return (
    <div className="relative h-screen flex flex-col overflow-hidden bg-[#ebe4d8] text-[11px] leading-[14px] text-[#45380f] font-['Liberation_Sans',Arial,sans-serif]">
      <TitleBar />
      <MenuBar />
      <MainToolbar />
      <DocToolbar />
      <div className="h-6 shrink-0 flex pt-px pl-px">
        <button type="button" className="h-[22px] w-[180px] flex items-center gap-[3px] pl-[2px] border border-[#b3ab84] whitespace-nowrap overflow-hidden">
          <ProcessIcon /> Рабочее место менеджера
        </button>
      </div>
      <ListWindow />
      <div className="h-[23px] shrink-0 flex items-start pt-px pl-px">
        <button type="button" className="h-[21px] w-[172px] flex items-center pl-px border border-[#b3ab84] bg-[#b1b1b1] text-[#3a3010]">
          <GridIcon /> Номенклатура
        </button>
      </div>
      <footer className="h-5 shrink-0 flex gap-[5px]">
        <div className="flex-1 h-[19px] flex items-center pl-[3px] border border-[#d1c8b8]">Удаление помеченных на удаление объектов</div>
        <div className="w-[29px] h-[19px] flex items-center justify-center border border-[#d1c8b8] text-[#a5966a]">CAP</div>
        <div className="w-[33px] h-[19px] flex items-center justify-center border border-[#d1c8b8]">NUM</div>
      </footer>
      <Annotations />
    </div>
  );
}

export default App;
